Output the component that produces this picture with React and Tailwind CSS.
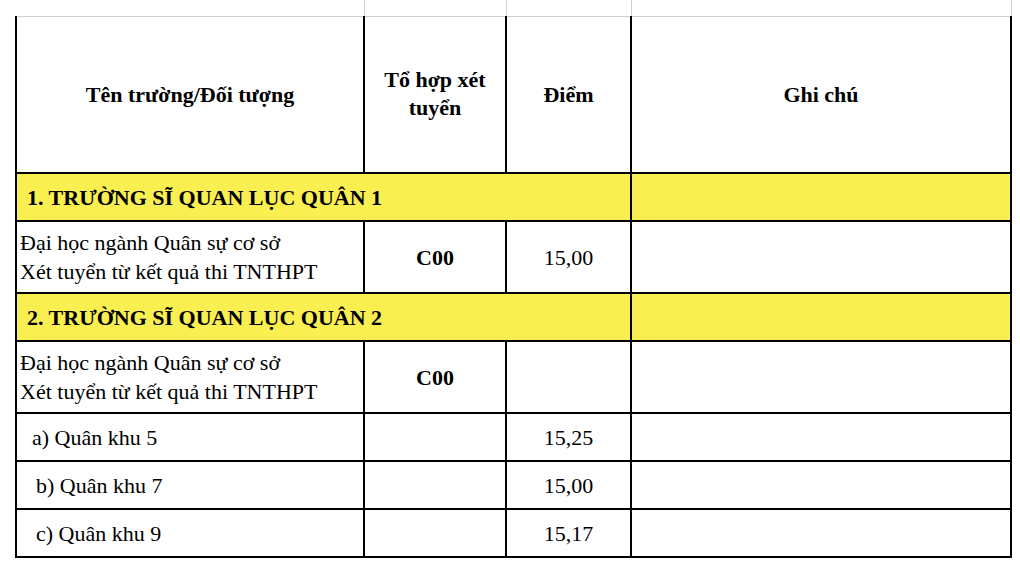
import React from "react";

const rows = [
  { type: "section", title: "1. TRƯỜNG SĨ QUAN LỤC QUÂN 1" },
  {
    type: "major",
    lines: ["Đại học ngành Quân sự cơ sở", "Xét tuyển từ kết quả thi TNTHPT"],
    combo: "C00",
    score: "15,00",
  },
  { type: "section", title: "2. TRƯỜNG SĨ QUAN LỤC QUÂN 2" },
  {
    type: "major",
    lines: ["Đại học ngành Quân sự cơ sở", "Xét tuyển từ kết quả thi TNTHPT"],
    combo: "C00",
    score: "",
  },
  { type: "sub", label: "a) Quân khu 5", pad: "pl-[15px]", score: "15,25" },
  { type: "sub", label: "b) Quân khu 7", pad: "pl-[19px]", score: "15,00" },
  { type: "sub", label: "c) Quân khu 9", pad: "pl-[19px]", score: "15,17" },
];

const cell = "border-2 border-black";

export default function App() {
  return (
    <div
      className="w-[1020px] h-[568px] bg-white text-black overflow-hidden pl-[15px]"
      style={{ fontFamily: '"Liberation Serif", "Times New Roman", serif' }}
    >
      <table className="table-fixed border-collapse w-[995px] text-[22px]">
        <colgroup>
          <col className="w-[348px]" />
          <col className="w-[142px]" />
          <col className="w-[125px]" />
          <col className="w-[380px]" />
        </colgroup>
        <tbody>
          {/* spreadsheet gridline strip */}
          <tr className="h-[16px]">
            <td className="border-b border-r border-[#cfcfcf]"></td>
            <td className="border-b border-r border-[#cfcfcf]"></td>
            <td className="border-b border-r border-[#cfcfcf]"></td>
            <td className="border-b border-r border-[#cfcfcf]"></td>
          </tr>

          {/* Header */}
          <tr className="h-[157px] font-bold text-center">
            <td className={`${cell} border-t border-t-[#cfcfcf]`}>Tên trường/Đối tượng</td>
            <td className={`${cell} border-t border-t-[#cfcfcf] leading-[28px] px-2`}>
              Tổ hợp xét tuyển
            </td>
            <td className={`${cell} border-t border-t-[#cfcfcf]`}>Điểm</td>
            <td className={`${cell} border-t border-t-[#cfcfcf]`}>Ghi chú</td>
          </tr>

          {rows.map((r, i) => {
            if (r.type === "section") {
              return (
                <tr key={i} className="h-[48px] bg-[#f9ef50] font-bold">
                  <td colSpan={3} className={`${cell} pl-[10px]`}>
                    {r.title}
                  </td>
                  <td className={cell}></td>
                </tr>
              );
            }
            if (r.type === "major") {
              return (
                <tr key={i} className="h-[72px]">
                  <td className={`${cell} pl-[3px] leading-[29px]`}>
                    {r.lines.map((l) => (
                      <div key={l}>{l}</div>
                    ))}
                  </td>
                  <td className={`${cell} text-center font-bold`}>{r.combo}</td>
                  <td className={`${cell} text-center`}>{r.score}</td>
                  <td className={cell}></td>
                </tr>
              );
            }
            return (
              <tr key={i} className="h-[48px]">
                <td className={`${cell} ${r.pad}`}>{r.label}</td>
                <td className={cell}></td>
                <td className={`${cell} text-center`}>{r.score}</td>
                <td className={cell}></td>
              </tr>
            );
          })}
        </tbody>
      </table>
    </div>
  );
}
